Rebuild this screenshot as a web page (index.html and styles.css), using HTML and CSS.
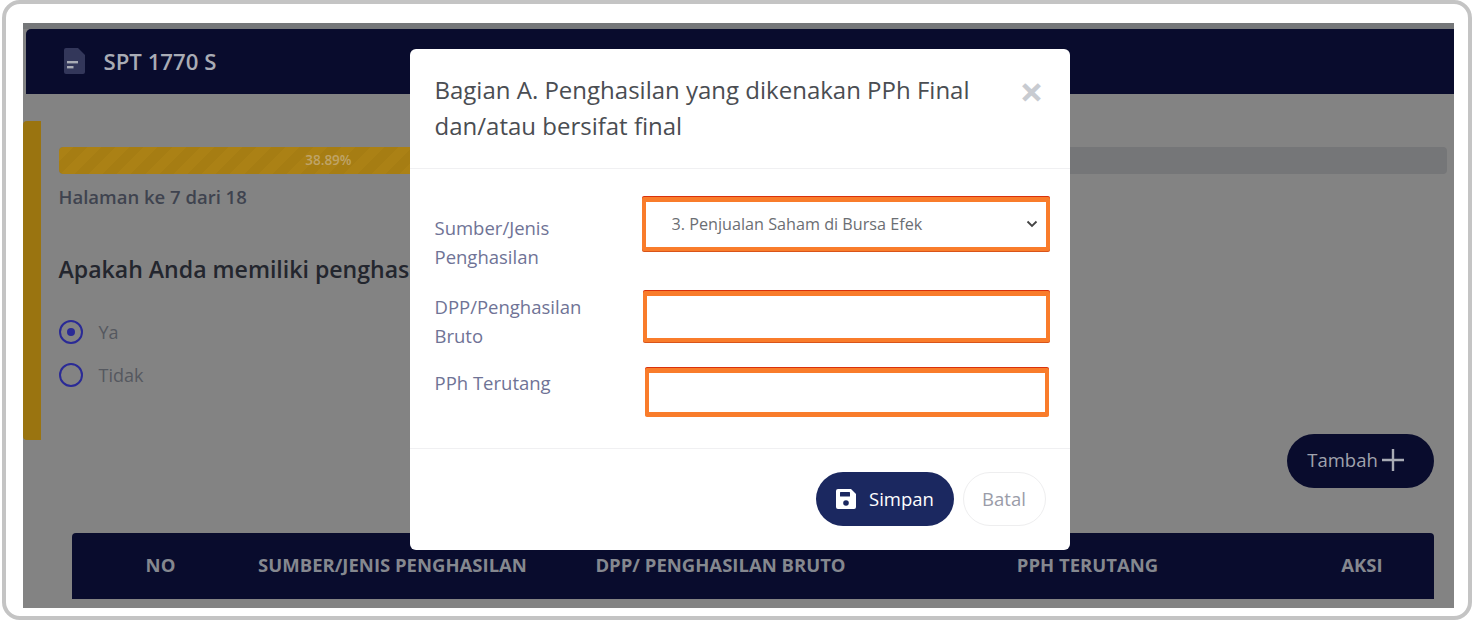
FILE: index.html
```html
<!DOCTYPE html>
<html lang="id">
<head>
  <meta charset="UTF-8">
  <meta name="viewport" content="width=device-width, initial-scale=1.0">
  <title>SPT 1770 S</title>
  <link rel="stylesheet" href="styles.css">
</head>
<body>
  <div class="frame">
    <div class="screen">
      <div class="topbar">
        <svg class="topbar-icon" width="21" height="26" viewBox="0 0 21 26">
          <path d="M2 0H14L21 7V24a2 2 0 0 1-2 2H2a2 2 0 0 1-2-2V2a2 2 0 0 1 2-2z" fill="#33375a"/>
          <rect x="3" y="13" width="11" height="2.4" fill="#a9acb5"/>
          <rect x="3" y="18" width="6.5" height="2.4" fill="#a9acb5"/>
        </svg>
        <span class="topbar-title">SPT 1770 S</span>
      </div>

      <div class="card">
        <div class="progress">
          <div class="progress-fill">38.89%</div>
        </div>
        <p class="page-note">Halaman ke 7 dari 18</p>
        <h2 class="question">Apakah Anda memiliki penghas</h2>
        <div class="radio-row">
          <span class="radio checked"></span>
          <span>Ya</span>
        </div>
        <div class="radio-row">
          <span class="radio"></span>
          <span>Tidak</span>
        </div>
      </div>

      <div class="actions">
        <a href="javascript:;" class="add-btn">
          Tambah
          <svg width="24" height="24" viewBox="0 0 24 24">
            <path d="M12 1V23M1 12H23" stroke="#a9acb5" stroke-width="2.4" fill="none"/>
          </svg>
        </a>
      </div>

      <div class="table-head">
        <span>NO</span>
        <span>SUMBER/JENIS PENGHASILAN</span>
        <span>DPP/ PENGHASILAN BRUTO</span>
        <span>PPH TERUTANG</span>
        <span>AKSI</span>
      </div>
    </div>

    <div class="modal">
      <div class="modal-head">
        <h3 class="modal-title">Bagian A. Penghasilan yang dikenakan PPh Final dan/atau bersifat final</h3>
        <span class="modal-close">×</span>
      </div>

      <div class="modal-body">
        <div class="form-row row-source">
          <label class="form-label">Sumber/Jenis Penghasilan</label>
          <div class="field">
            <select class="field-select">
              <option>3. Penjualan Saham di Bursa Efek</option>
            </select>
          </div>
        </div>
        <div class="form-row row-bruto">
          <label class="form-label">DPP/Penghasilan Bruto</label>
          <div class="field">
            <input class="field-input" type="text">
          </div>
        </div>
        <div class="form-row row-pph">
          <label class="form-label">PPh Terutang</label>
          <div class="field">
            <input class="field-input" type="text">
          </div>
        </div>
      </div>

      <div class="modal-foot">
        <a href="javascript:;" class="btn btn-save">
          <svg width="22" height="22" viewBox="0 0 22 22">
            <path d="M3 1H16L21 6V19a2 2 0 0 1-2 2H3a2 2 0 0 1-2-2V3a2 2 0 0 1 2-2z" fill="#fff"/>
            <rect x="5" y="4" width="10" height="4.5" rx="0.5" fill="#1b2860"/>
            <circle cx="11" cy="15" r="2.8" fill="#1b2860"/>
          </svg>
          Simpan
        </a>
        <a href="javascript:;" class="btn btn-cancel">Batal</a>
      </div>
    </div>
  </div>
</body>
</html>
```

FILE: styles.css
```css
* {
  box-sizing: border-box;
}

a {
  text-decoration: none;
}

body {
  margin: 0;
  background-color: #fff;
  font-family: "Open Sans", "Noto Sans", sans-serif;
}

.frame {
  position: relative;
  width: 1470px;
  height: 620px;
  margin-left: 2px;
  padding: 18.5px 14.5px 7px 16.5px;
  border: 4.5px solid #c4c4c4;
  border-radius: 18px;
  background-color: #fff;
}

.screen {
  height: 585px;
  padding-top: 6px;
  overflow: hidden;
  background-color: #838383;
  box-shadow: inset 0 6px 0 #757779;
}

.topbar {
  display: flex;
  align-items: center;
  height: 65px;
  margin-left: 3px;
  padding-left: 38px;
  border-top-left-radius: 5px;
  background-color: #090c2d;
}

.topbar-icon {
  margin-right: 19px;
}

.topbar-title {
  font-size: 22.2px;
  font-weight: 600;
  color: #a9acb5;
}

.card {
  height: 319px;
  margin-top: 27px;
  padding: 26px 7px 0 18px;
  border-left: 18px solid #9a7410;
  border-radius: 4px 0 0 4px;
}

.progress {
  height: 27px;
  border-radius: 4px;
  background-color: #757678;
  overflow: hidden;
}

.progress-fill {
  width: 38.89%;
  height: 100%;
  border-radius: 4px 0 0 4px;
  background-color: #ab8115;
  background-image: repeating-linear-gradient(135deg, #ab8115 0, #ab8115 10px, #a67d13 10px, #a67d13 20px);
  text-align: center;
  font-size: 13.5px;
  font-weight: 600;
  line-height: 27px;
  color: #bfa468;
}

.page-note {
  margin: 9px 0 0;
  font-size: 18.5px;
  font-weight: 600;
  line-height: 27px;
  color: #3f434f;
}

.question {
  margin: 43px 0 0;
  font-size: 23.1px;
  font-weight: 600;
  line-height: 33px;
  white-space: nowrap;
  color: #23262e;
}

.radio-row {
  display: flex;
  align-items: center;
  height: 43px;
  font-size: 18px;
  color: #55585f;
}

.question + .radio-row {
  margin-top: 25px;
}

.radio {
  display: flex;
  align-items: center;
  justify-content: center;
  width: 24px;
  height: 24px;
  margin-right: 16px;
  border: 2px solid #2a2a96;
  border-radius: 50%;
}

.radio.checked::after {
  content: "";
  width: 8px;
  height: 8px;
  border-radius: 50%;
  background-color: #2a2a96;
}

.actions {
  display: flex;
  justify-content: flex-end;
  margin-top: -6px;
  padding-right: 20px;
}

.add-btn {
  display: flex;
  align-items: center;
  justify-content: center;
  gap: 3px;
  width: 147px;
  height: 54px;
  padding: 0 8px 2px 0;
  border-radius: 27px;
  background-color: #090c2d;
  font-size: 18.5px;
  color: #a0a3ae;
}

.table-head {
  display: grid;
  grid-template-columns: 136px 328px 328px 406px 143px;
  align-items: center;
  height: 66px;
  margin: 45px 20px 0 49px;
  padding: 0 0 2px 21px;
  border-radius: 4px 4px 0 0;
  background-color: #090c2d;
  text-align: center;
  font-size: 18.5px;
  font-weight: 700;
  color: #85888f;
}

.modal {
  position: absolute;
  top: 44.5px;
  left: 403.5px;
  width: 660px;
  height: 501px;
  border-radius: 6px;
  background-color: #fff;
}

.modal-head {
  display: flex;
  justify-content: space-between;
  height: 120px;
  padding: 23.5px 26px 0 25px;
  border-bottom: 1px solid #f0f0f2;
}

.modal-title {
  width: 560px;
  margin: 0;
  font-size: 24px;
  font-weight: 400;
  line-height: 36px;
  color: #4a4d52;
}

.modal-close {
  margin-top: -6px;
  font-size: 42px;
  font-weight: 700;
  line-height: 50px;
  color: #c8cbd1;
}

.modal-body {
  height: 280px;
  padding: 27px 19px 0 25px;
  border-bottom: 1px solid #f0f0f2;
}

.form-row {
  display: flex;
  align-items: flex-start;
}

.form-label {
  flex: none;
  width: 190px;
  font-size: 18.5px;
  line-height: 29px;
  color: #6f7396;
}

.field {
  flex: none;
  margin-top: 1px;
  border: 4px solid #f97c2b;
  border-top-width: 5px;
  border-radius: 2px;
  background-color: #fff;
  box-shadow: 0 -1px 0 #d9310c, 0 1px 0 #d9541a;
}

.row-source {
  height: 76px;
}

.row-source .form-label {
  padding-top: 17px;
}

.row-source .field {
  width: 408px;
  height: 54px;
  margin-left: 17px;
}

.row-bruto {
  height: 60px;
  margin-top: 18px;
}

.row-bruto .form-label {
  padding-top: 2px;
}

.row-bruto .field {
  width: 407px;
  height: 51px;
  margin-left: 18px;
}

.row-pph {
  height: 50px;
  margin-top: 17px;
}

.row-pph .form-label {
  padding-top: 1px;
}

.row-pph .field {
  width: 404px;
  height: 49px;
  margin-left: 20px;
  border-bottom-width: 5px;
  box-shadow: 0 -1px 0 #d9310c;
}

.field-select,
.field-input {
  display: block;
  width: 100%;
  height: 100%;
  border: 0;
  outline: 0;
  background-color: #fff;
  font-family: inherit;
}

.field-select {
  padding-left: 26px;
  appearance: none;
  background-image: url("data:image/svg+xml,%3Csvg xmlns='http://www.w3.org/2000/svg' width='12' height='8' viewBox='0 0 12 8'%3E%3Cpath d='M1.5 1.5L6 6L10.5 1.5' stroke='%23444' stroke-width='1.8' fill='none'/%3E%3C/svg%3E");
  background-repeat: no-repeat;
  background-position: right 8px center;
  font-size: 16.2px;
  color: #6b6e73;
}

.modal-foot {
  display: flex;
  justify-content: flex-end;
  gap: 9px;
  padding: 23px 24px 0 0;
}

.btn {
  display: flex;
  align-items: center;
  justify-content: center;
  height: 54px;
  border-radius: 27px;
  font-size: 18.5px;
}

.btn-save {
  gap: 12px;
  width: 138px;
  background-color: #1b2860;
  color: #fff;
}

.btn-cancel {
  width: 83px;
  border: 1px solid #eeeeef;
  color: #9a9ca8;
}
```
